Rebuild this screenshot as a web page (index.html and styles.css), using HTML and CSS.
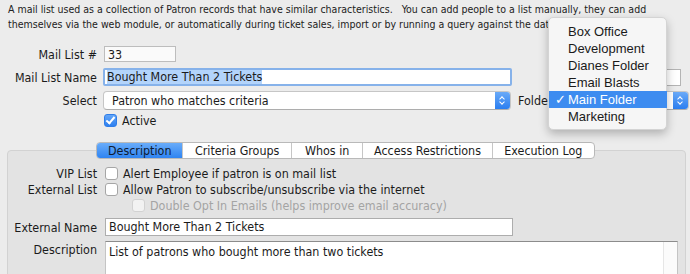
FILE: index.html
```html
<!DOCTYPE html>
<html lang="en">
<head>
    <meta charset="UTF-8">
    <title>Mail List</title>
    <link rel="stylesheet" href="styles.css">
</head>
<body>
    <p class="intro">A mail list used as a collection of Patron records that have similar characteristics. &nbsp; You can add people to a list manually, they can add<br>themselves via the web module, or automatically during ticket sales, import or by running a query against the database.</p>

    <div class="form">
        <div class="row row-num">
            <span class="label">Mail List #</span>
            <div class="field num">33</div>
        </div>
        <div class="row row-name">
            <span class="label">Mail List Name</span>
            <div class="field name focused"><span class="selected">Bought More Than 2 Tickets</span></div>
            <div class="field side"></div>
        </div>
        <div class="row row-select">
            <span class="label">Select</span>
            <div class="popup wide">
                <span>Patron who matches criteria</span>
                <span class="stepper"></span>
            </div>
            <span class="label-inline">Folder</span>
            <div class="popup folder">
                <span>Main Folder</span>
                <span class="stepper"></span>
            </div>
        </div>
        <div class="row row-check">
            <span class="label"></span>
            <span class="check checked"></span>
            <span>Active</span>
        </div>
    </div>

    <div class="tabs">
        <span class="tab active">Description</span>
        <span class="tab">Criteria Groups</span>
        <span class="tab">Whos in</span>
        <span class="tab">Access Restrictions</span>
        <span class="tab">Execution Log</span>
    </div>

    <div class="panel">
        <div class="prow">
            <span class="plabel">VIP List</span>
            <span class="check"></span>
            <span>Alert Employee if patron is on mail list</span>
        </div>
        <div class="prow">
            <span class="plabel">External List</span>
            <span class="check"></span>
            <span>Allow Patron to subscribe/unsubscribe via the internet</span>
        </div>
        <div class="prow sub">
            <span class="plabel"></span>
            <span class="check disabled"></span>
            <span>Double Opt In Emails (helps improve email accuracy)</span>
        </div>
        <div class="prow prow-field">
            <span class="plabel">External Name</span>
            <div class="field ext">Bought More Than 2 Tickets</div>
        </div>
        <div class="prow prow-area">
            <span class="plabel">Description</span>
            <div class="area">
                <span>List of patrons who bought more than two tickets</span>
                <span class="scroll"></span>
            </div>
        </div>
    </div>

    <div class="menu">
        <div class="item">Box Office</div>
        <div class="item">Development</div>
        <div class="item">Dianes Folder</div>
        <div class="item">Email Blasts</div>
        <div class="item current">Main Folder</div>
        <div class="item">Marketing</div>
    </div>
</body>
</html>
```

FILE: styles.css
```css
body {
    margin: 0;
    background-color: #ececec;
    font-family: "DejaVu Sans Condensed", "DejaVu Sans", sans-serif;
    font-size: 12.4px;
    color: #1b1b1b;
    position: relative;
    height: 274px;
    overflow: hidden;
}
.intro {
    margin: 0;
    padding: 2px 8px 0;
    font-size: 10.5px;
    line-height: 15px;
    color: #222;
    white-space: nowrap;
}
.form {
    margin-top: 14px;
}
.row {
    display: flex;
    align-items: center;
}
.label {
    width: 97px;
    text-align: right;
    margin-right: 7px;
    flex-shrink: 0;
}
.row-num {
    height: 16px;
}
.row-name {
    height: 18px;
    margin-top: 6px;
}
.row-select {
    height: 19px;
    margin-top: 5px;
}
.row-check {
    height: 13px;
    margin-top: 4px;
}
.field {
    box-sizing: border-box;
    background-color: #fff;
    border: 1px solid #b4b4b4;
    padding: 0 3px;
    line-height: 15px;
    white-space: nowrap;
    overflow: hidden;
}
.field.num {
    width: 72px;
    height: 16px;
    border-color: #bdbdbd;
    background-color: #fafafa;
}
.field.name {
    width: 409px;
    height: 18px;
    margin-left: -1px;
}
.field.focused {
    border: 2px solid #86b2ea;
    border-radius: 2px;
    padding: 0 2px;
    line-height: 14px;
}
.selected {
    background-color: #b3d4fb;
}
.field.side {
    width: 100px;
    height: 17px;
    margin-left: auto;
    margin-right: 9px;
}
.popup {
    box-sizing: border-box;
    height: 19px;
    display: flex;
    align-items: center;
    background-color: #fff;
    border: 1px solid #c6c6c6;
    border-bottom-color: #adadad;
    border-radius: 4px;
    padding-left: 8px;
    position: relative;
    overflow: hidden;
}
.popup.wide {
    width: 408px;
    margin-left: -1px;
}
.popup.folder {
    width: 124px;
    margin-left: 13px;
}
.stepper {
    position: absolute;
    right: 0;
    top: 0;
    bottom: 0;
    width: 15px;
    background: linear-gradient(#6aaaf8, #2a7ef0);
}
.stepper::before,
.stepper::after {
    content: "";
    position: absolute;
    left: 5px;
    width: 3px;
    height: 3px;
    border-left: 1.5px solid #fff;
    border-top: 1.5px solid #fff;
}
.stepper::before {
    top: 5px;
    transform: rotate(45deg);
}
.stepper::after {
    bottom: 5px;
    transform: rotate(-135deg);
}
.label-inline {
    margin-left: 7px;
}
.check {
    box-sizing: border-box;
    width: 13px;
    height: 13px;
    border: 1px solid #a6a6a6;
    border-radius: 3px;
    background-color: #fff;
    margin-right: 5px;
    flex-shrink: 0;
    position: relative;
}
.check.checked {
    background: linear-gradient(#63a6f8, #2e80f0);
    border-color: #2f7de8;
}
.check.checked::after {
    content: "";
    position: absolute;
    left: 3px;
    top: 0px;
    width: 3px;
    height: 7px;
    border-right: 2px solid #fff;
    border-bottom: 2px solid #fff;
    transform: rotate(40deg);
}
.check.disabled {
    border-color: #d2d2d2;
    background-color: #f2f2f2;
}
.tabs {
    display: flex;
    margin: 15px 0 0 96px;
    width: 499px;
    height: 17px;
    box-sizing: border-box;
    border: 1px solid #b9b9b9;
    border-radius: 4px;
    background-color: #fff;
    position: relative;
    z-index: 1;
    overflow: hidden;
}
.tab {
    display: flex;
    align-items: center;
    justify-content: center;
    border-left: 1px solid #c6c6c6;
    line-height: 15px;
}
.tab:nth-child(1) { width: 86px; border-left: none; }
.tab:nth-child(2) { width: 108px; }
.tab:nth-child(3) { width: 71px; }
.tab:nth-child(4) { width: 129px; }
.tab:nth-child(5) { width: 102px; }
.tab.active {
    background: linear-gradient(#69acf9, #2f84f2);
    color: #0f1c33;
}
.panel {
    margin: -9px 4px 0 7px;
    height: 140px;
    background-color: #e3e3e3;
    border: 1px solid #d2d2d2;
    border-radius: 4px;
    padding-top: 14px;
    box-sizing: border-box;
}
.prow {
    display: flex;
    align-items: center;
    height: 16px;
}
.prow.sub {
    color: #a4a4a4;
}
.prow.sub .plabel {
    width: 116px;
}
.plabel {
    width: 89px;
    text-align: right;
    margin-right: 8px;
    flex-shrink: 0;
}
.prow-field {
    height: 18px;
    margin-top: 5px;
}
.field.ext {
    width: 408px;
    height: 18px;
    line-height: 16px;
    border-color: #adadad;
}
.prow-area {
    align-items: flex-start;
    margin-top: 5px;
    height: 60px;
}
.prow-area .plabel {
    line-height: 18px;
}
.area {
    box-sizing: border-box;
    width: 573px;
    height: 60px;
    background-color: #fff;
    border: 1px solid #c4c4c4;
    border-top-color: #8c8c8c;
    padding: 2px 3px;
    position: relative;
}
.scroll {
    position: absolute;
    top: 0;
    right: 0;
    bottom: 0;
    width: 13px;
    border-left: 1px solid #e6e6e6;
    background-color: #fbfbfb;
}
.menu {
    position: absolute;
    left: 548px;
    top: 17px;
    width: 119px;
    padding: 5px 0 4px;
    box-sizing: border-box;
    background-color: #f6f6f6;
    border: 1px solid #d4d4d4;
    border-radius: 5px;
    box-shadow: 0 4px 10px rgba(0, 0, 0, 0.25);
    font-family: "Liberation Sans", sans-serif;
    font-size: 13px;
    color: #1a1a1a;
    z-index: 2;
}
.item {
    height: 17px;
    line-height: 17px;
    padding-left: 19px;
    position: relative;
}
.item.current {
    background-color: #3d8cf0;
    color: #fff;
    margin-right: -1px;
}
.item.current::before {
    content: "\2713";
    position: absolute;
    left: 6px;
}
```
